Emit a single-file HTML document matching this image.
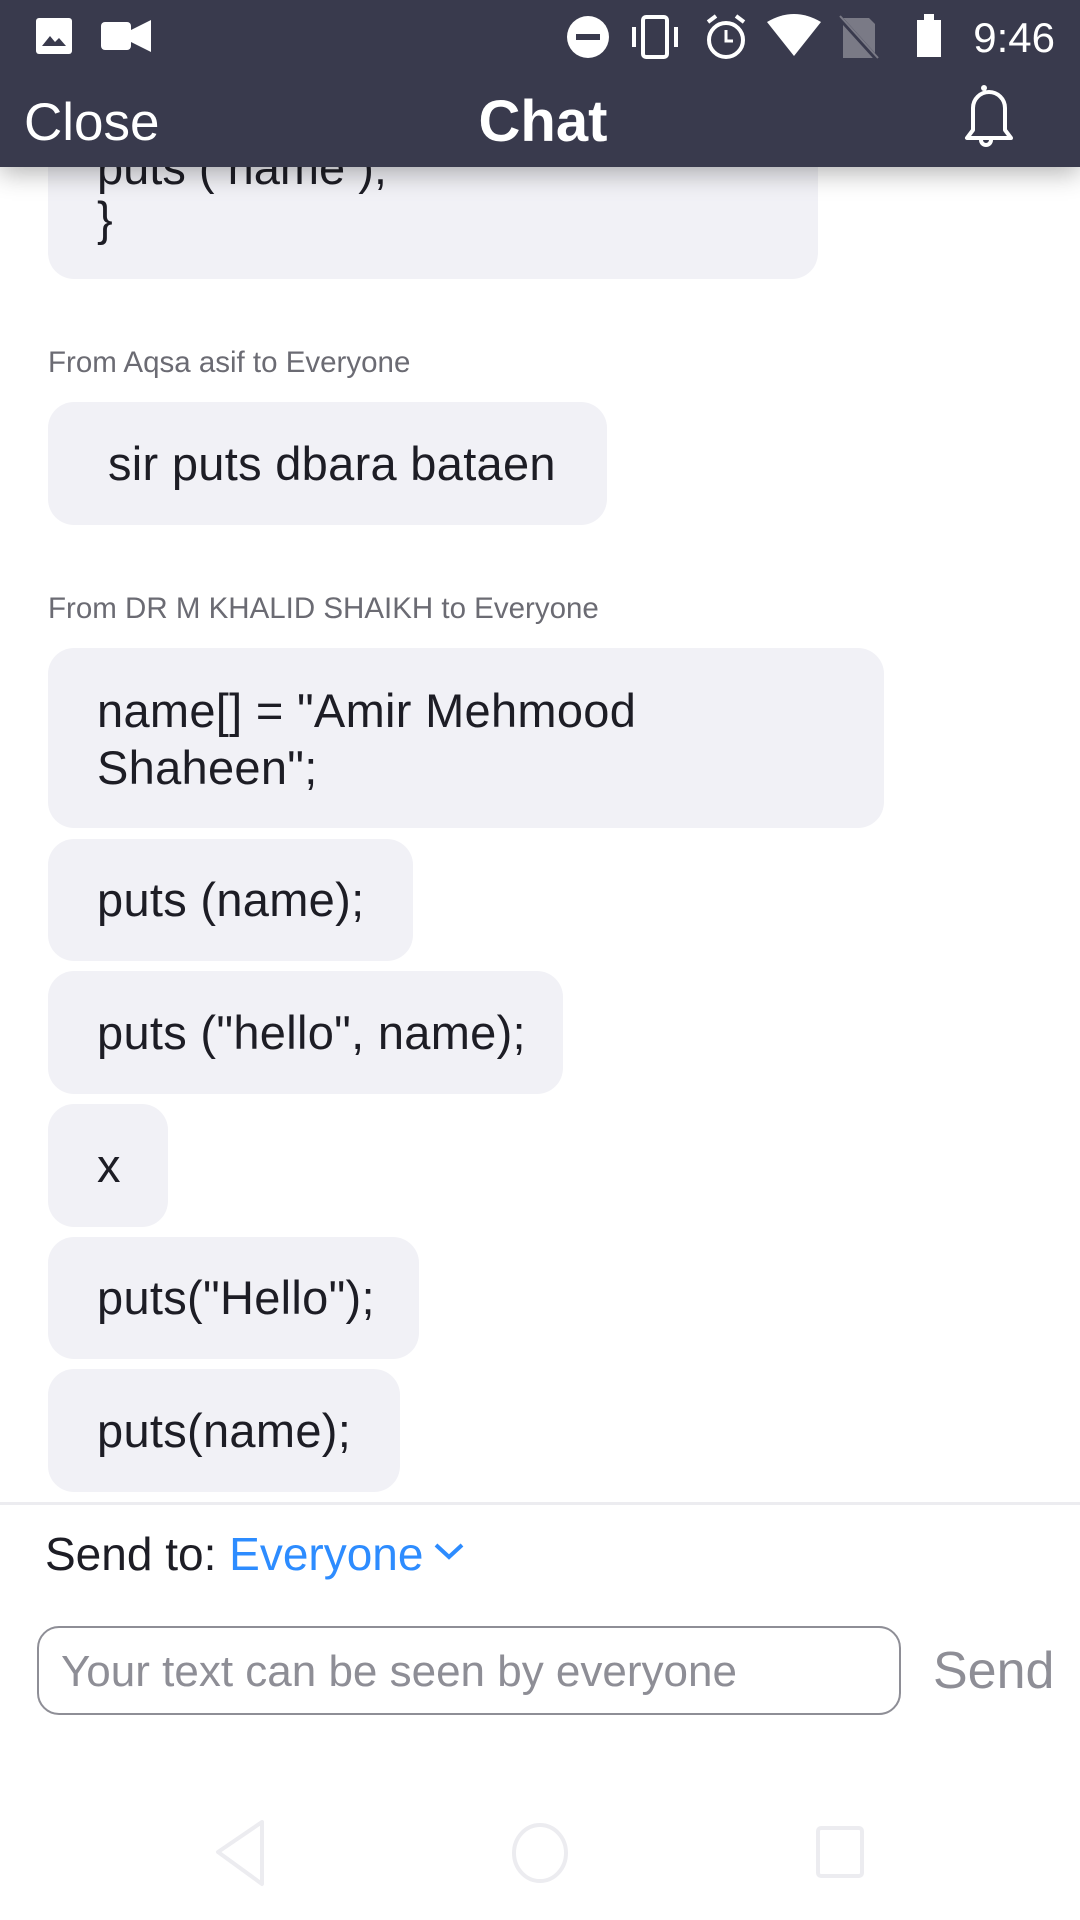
<!DOCTYPE html>
<html><head><meta charset="utf-8"><style>
*{margin:0;padding:0;box-sizing:border-box}
body{width:1080px;height:1920px;background:#fff;font-family:"Liberation Sans",sans-serif;position:relative;overflow:hidden;color:#1d1d25}
.b{position:absolute;left:48px;background:#f1f1f6;border-radius:26px;font-size:47px;letter-spacing:0.3px;padding-left:49px;line-height:57px}
.f{position:absolute;left:48px;font-size:29.5px;color:#6b6b73}
.hdr{position:absolute;left:0;top:0;width:1080px;height:167px;background:#393a4d;box-shadow:0 6px 24px rgba(0,0,0,0.3);color:#fff}
</style></head><body>
<div class="b" style="top:100px;width:770px;height:179px;">
<div style="position:absolute;top:90px;left:49px">}</div></div>
<div style="position:absolute;left:97px;top:140px;font-size:47px">puts ( name );</div>

<div class="hdr">
<svg width="1080" height="167" style="position:absolute;left:0;top:0">
<rect x="36" y="18" width="36" height="36" rx="3" fill="#fff"/><path d="M42 46 l8-10 5 6 4-4 7 8z" fill="#393a4d"/>
<rect x="101" y="22" width="30" height="28" rx="4" fill="#fff"/><path d="M131 30 l20-10 v32 l-20-10z" fill="#fff"/>
<circle cx="588" cy="37" r="21" fill="#fff"/><rect x="576" y="34" width="24" height="6" fill="#393a4d"/>
<rect x="643" y="17" width="24" height="40" rx="3" fill="none" stroke="#fff" stroke-width="4"/><rect x="632" y="27" width="4" height="20" fill="#fff"/><rect x="674" y="27" width="4" height="20" fill="#fff"/>
<circle cx="726" cy="40" r="17" fill="none" stroke="#fff" stroke-width="4"/><path d="M726 30v11h7" stroke="#fff" stroke-width="3" fill="none"/><path d="M708 22l8-6M744 22l-8-6" stroke="#fff" stroke-width="4"/>
<path d="M767 22 Q794 6 821 22 L794 56z" fill="#fff"/>
<path d="M843 18h26l6 6v34h-32z" fill="#7a7a86"/><path d="M840 18 L878 60" stroke="#393a4d" stroke-width="5"/><path d="M840 16 L878 58" stroke="#7a7a86" stroke-width="2"/>
<rect x="917" y="20" width="24" height="37" fill="#fff"/><rect x="924" y="14" width="10" height="6" fill="#fff"/>
<text x="1055" y="52" font-size="42" fill="#fff" text-anchor="end" font-family="Liberation Sans">9:46</text>
<text x="24" y="140" font-size="53" fill="#fff" font-family="Liberation Sans">Close</text>
<text x="543" y="141" font-size="58" fill="#fff" font-weight="bold" text-anchor="middle" font-family="Liberation Sans">Chat</text>
<path d="M967 138 h44 l-6-8 v-22 a16 16 0 0 0-32 0 v22 z" fill="none" stroke="#fff" stroke-width="4" stroke-linejoin="round"/><circle cx="984" cy="88" r="3" fill="#fff"/><path d="M981 140 a5 5 0 0 0 10 0" fill="none" stroke="#fff" stroke-width="4"/>
</svg></div>

<div class="f" style="top:346px">From Aqsa asif to Everyone</div>
<div class="b" style="top:402px;width:559px;height:123px;padding-top:33px;padding-left:60px">sir puts dbara bataen</div>
<div class="f" style="top:592px">From DR M KHALID SHAIKH to Everyone</div>
<div class="b" style="top:648px;width:836px;height:180px;padding-top:34px">name[] = "Amir Mehmood<br>Shaheen";</div>
<div class="b" style="top:839px;width:365px;height:122px;padding-top:32px">puts (name);</div>
<div class="b" style="top:971px;width:515px;height:123px;padding-top:33px">puts ("hello", name);</div>
<div class="b" style="top:1104px;width:120px;height:123px;padding-top:33px">x</div>
<div class="b" style="top:1237px;width:371px;height:122px;padding-top:32px">puts("Hello");</div>
<div class="b" style="top:1369px;width:352px;height:123px;padding-top:33px">puts(name);</div>
<div style="position:absolute;left:0;top:1502px;width:1080px;height:3px;background:#ececf0"></div>
<div style="position:absolute;left:45px;top:1527px;font-size:46px;color:#1d1d25">Send to: <span style="color:#2d8cff">Everyone</span></div>
<svg style="position:absolute;left:433px;top:1541px" width="32" height="20"><path d="M3 4 L16 16 L29 4" stroke="#2d8cff" stroke-width="4" fill="none"/></svg>
<div style="position:absolute;left:37px;top:1626px;width:864px;height:89px;border:2px solid #8e8e96;border-radius:22px;"></div>
<div style="position:absolute;left:61px;top:1647px;font-size:44px;color:#8e8e96">Your text can be seen by everyone</div>
<div style="position:absolute;left:933px;top:1641px;font-size:52px;color:#8e8e96">Send</div>
<svg style="position:absolute;left:0;top:1810px" width="1080" height="90">
<path d="M262 12 L218 42 L262 74 Z" fill="none" stroke="#ececf0" stroke-width="4" stroke-linejoin="round"/>
<ellipse cx="540" cy="43" rx="26" ry="28" fill="none" stroke="#ececf0" stroke-width="4"/>
<rect x="818" y="18" width="44" height="48" rx="3" fill="none" stroke="#ececf0" stroke-width="4"/>
</svg>
</body></html>
